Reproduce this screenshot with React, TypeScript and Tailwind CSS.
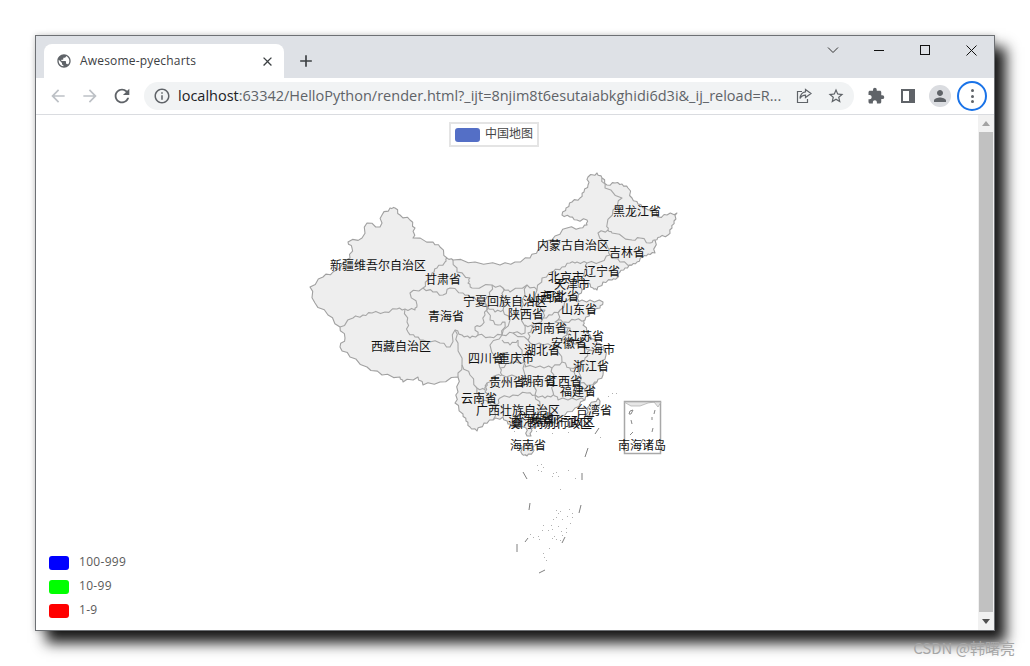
import React from "react";
import { MdArrowBack, MdArrowForward, MdRefresh, MdInfoOutline, MdStarBorder, MdExtension, MdPerson, MdClose, MdAdd, MdPublic } from "react-icons/md";

type P = [number, number];

function rough(pts: P[], closed = false): string {
  const out: string[] = [];
  const n = pts.length;
  const last = closed ? n : n - 1;
  for (let i = 0; i < last; i++) {
    const a = pts[i];
    const b = pts[(i + 1) % n];
    out.push(`${a[0]},${a[1]}`);
    const dx = b[0] - a[0];
    const dy = b[1] - a[1];
    const len = Math.hypot(dx, dy);
    if (len > 4) {
      const s = i % 2 === 0 ? 1 : -1;
      const off = Math.min(1.3, len * 0.12) * s;
      out.push(`${(a[0] + dx * 0.35 - (dy / len) * off).toFixed(1)},${(a[1] + dy * 0.35 + (dx / len) * off).toFixed(1)}`);
      out.push(`${(a[0] + dx * 0.7 + (dy / len) * off).toFixed(1)},${(a[1] + dy * 0.7 - (dx / len) * off).toFixed(1)}`);
    }
  }
  if (!closed) out.push(`${pts[n - 1][0]},${pts[n - 1][1]}`);
  return out.join(" ");
}

const outer: P[] = [
  [390,208],[395,208],[400,215],[410,220],[415,228],[413,238],[433,242],[440,247],[447,258],[453,260],[475,262],[500,265],[515,262],[530,258],[538,250],[543,245],[555,236],[567,228],[580,228],[587,225],[587,220],[577,220],[570,217],[562,215],[566,208],[572,202],[580,198],[584,192],[588,185],[588,177],[597,173],[602,178],[607,185],[615,183],[622,184],[628,188],[632,198],[638,204],[645,208],[655,210],[658,217],[667,215],[677,213],[674,221],[672,228],[668,235],[660,237],[655,240],[655,253],[648,254],[643,257],[637,262],[632,265],[625,268],[620,272],[617,278],[612,280],[603,282],[597,290],[593,288],[588,283],[582,290],[578,297],[578,302],[590,300],[603,302],[600,308],[590,313],[585,320],[583,325],[590,335],[597,343],[604,347],[606,355],[600,365],[603,375],[597,382],[590,392],[585,400],[575,408],[565,415],[548,424],[536,427],[531,428],[531,436],[527,436],[526,428],[515,427],[508,424],[503,417],[493,420],[484,423],[477,431],[470,427],[466,421],[463,414],[455,403],[458,392],[458,377],[440,382],[423,385],[418,377],[403,382],[400,377],[382,375],[367,367],[350,357],[340,347],[345,338],[340,327],[328,315],[315,303],[310,287],[323,277],[333,272],[350,258],[352,248],[348,242],[362,238],[367,223],[380,227],[382,215],
];

const inner: P[][] = [
  [[447,258],[445,262],[437,268],[432,273],[428,280],[423,288],[410,293],[417,305],[415,310],[405,309],[397,309],[385,312],[372,313],[363,315],[353,318],[340,327]],
  [[405,309],[407,322],[408,332],[415,337],[423,340],[440,343],[450,347],[455,330],[458,343],[462,365],[458,377]],
  [[423,288],[433,292],[443,295],[450,288],[463,293],[470,297],[480,300],[487,306],[485,315],[482,325],[475,327],[478,335],[470,338],[462,335],[455,330]],
  [[453,260],[457,272],[470,278],[468,283],[472,288],[492,285],[490,296],[483,300],[487,306],[495,312],[503,310],[503,296],[503,288],[510,292],[527,285],[537,290],[542,278],[553,272],[562,267],[570,263],[577,262],[587,263],[600,262],[610,255],[608,248],[598,233],[608,230],[607,225],[613,210],[622,198],[605,188],[602,178]],
  [[492,285],[503,288]],
  [[487,306],[490,320],[498,325],[505,322],[502,335],[490,337],[478,335]],
  [[503,310],[510,320],[502,335],[513,333],[525,333],[522,315],[522,300],[527,285]],
  [[608,230],[612,233],[632,240],[640,238],[650,243],[655,240]],
  [[610,255],[620,262],[632,265]],
  [[587,263],[585,270],[578,285],[582,290]],
  [[537,290],[535,305],[545,310],[543,318],[535,327],[525,325]],
  [[543,318],[552,315],[560,310],[568,300],[578,297]],
  [[560,310],[558,320],[565,322],[575,320],[585,320]],
  [[558,320],[555,322],[570,328],[565,332],[572,342],[582,345],[590,350],[597,350]],
  [[535,327],[528,333],[530,343],[543,345],[557,345],[567,335],[570,328]],
  [[513,333],[528,340],[530,343]],
  [[557,345],[562,362],[570,368],[580,366],[585,358],[590,350]],
  [[518,340],[522,355],[525,362],[525,367],[540,366],[552,368],[562,362]],
  [[552,368],[553,378],[553,392],[558,400],[572,398],[580,383],[575,375],[570,368]],
  [[580,366],[580,383],[590,385],[597,382]],
  [[572,398],[585,400]],
  [[580,383],[585,392]],
  [[502,340],[510,345],[518,340]],
  [[500,368],[510,363],[525,362],[523,380],[517,377],[502,375],[500,368]],
  [[500,368],[490,345],[502,335]],
  [[462,365],[470,375],[477,388],[485,390],[487,383],[497,375],[502,375]],
  [[487,383],[485,392],[497,405],[500,398],[513,395],[527,393],[535,395],[535,382],[523,380]],
  [[477,388],[480,400],[497,405],[493,420]],
  [[535,395],[545,398],[553,395]],
  [[535,395],[540,405],[538,415],[542,424]],
];

const hainan: P[] = [[521,447],[528,444],[534,446],[533,452],[527,456],[522,454]];
const taiwan: P[] = [[598,398],[600,401],[596,410],[590,418],[586,415],[589,406]];

const dashes: [number, number, number, number][] = [
  [523,472,527,479],[582,473,582,480],[581,505,579,513],[530,503,529,510],[565,537,562,543],[517,544,517,552],[545,570,539,573],[528,538,525,542],[599,428,595,434],[588,448,585,457],
];

const dots: P[] = [
  [537,465],[541,464],[543,467],[538,470],[541,471],[553,473],[556,472],[558,476],[552,476],[568,470],[575,478],[560,489],[556,510],[558,513],[556,517],[560,511],[569,509],[572,513],[567,516],[562,519],[553,519],[551,525],[558,526],[552,529],[561,531],[566,528],[572,517],[570,523],[566,532],[554,536],[552,538],[556,539],[548,530],[543,525],[542,530],[538,536],[539,539],[533,537],[530,534],[562,535],[560,540],[549,548],[543,553],[544,557],[546,560],[525,455],[514,431],[536,431],[558,427],[552,433],[568,432],[608,396],[612,393],[616,393],[600,437],
];

const labels: [string, number, number][] = [
  ["新疆维吾尔自治区",378,265],["甘肃省",443,279],["宁夏回族自治区",505,301],["青海省",446,316],["西藏自治区",401,346],["四川省",486,358],["重庆市",516,358],["贵州省",507,382],["云南省",479,398],["广西壮族自治区",518,410],["湖南省",538,381],["江西省",564,381],["福建省",578,391],["台湾省",594,410],["广东省",536,418],["澳门特别行政区",550,423],["香港特别行政区",553,421],["海南省",528,445],["湖北省",542,350],["安徽省",569,343],["上海市",597,349],["江苏省",586,336],["浙江省",591,366],["河南省",549,328],["陕西省",526,314],["山东省",579,309],["山西省",546,297],["河北省",561,296],["北京市",566,277],["天津市",572,284],["辽宁省",602,271],["吉林省",627,252],["内蒙古自治区",573,245],["黑龙江省",637,211],["南海诸岛",642,445],
];

function ChinaMap() {
  return (
    <svg className="absolute inset-0" width="942" height="515" viewBox="36 115 942 515">
      <g fill="#eeeeee" stroke="#a0a0a0" strokeWidth="1.1" strokeLinejoin="round">
        <polygon points={rough(outer, true)} />
        <polygon points={rough(hainan, true)} />
        <polygon points={rough(taiwan, true)} />
      </g>
      <g fill="none" stroke="#a6a6a6" strokeWidth="1.1" strokeLinejoin="round">
        {inner.map((l, i) => <polyline key={i} points={rough(l)} />)}
      </g>
      <g stroke="#808080" strokeWidth="1">
        {dashes.map((d, i) => <line key={i} x1={d[0]} y1={d[1]} x2={d[2]} y2={d[3]} />)}
      </g>
      <g fill="#b0b0b0">
        {dots.map((d, i) => <rect key={i} x={d[0]} y={d[1]} width="1" height="1" />)}
      </g>
      <rect x="624.5" y="401.5" width="36" height="52" fill="none" stroke="#a8a8a8" strokeWidth="1.5" />
      <path d="M624 402 L661 402 L658 407 L654 402 L648 403 L640 406 L631 406 Z" fill="#e6e6e6" stroke="#aaaaaa" strokeWidth="0.7" />
      <g stroke="#888888" strokeWidth="1" fill="none">
        <path d="M630 411 L633 410 L631 414 L629 414 Z" />
        <path d="M655 410 L654 414 M652 417 L652 420 M653 428 L652 432 M650 441 L647 445 M631 420 L632 424 M633 432 L630 435 M643 439 L641 443" />
      </g>
      <g fill="#111111" fontSize="12" textAnchor="middle">
        {labels.map(([t, x, y]) => <text key={t} x={x} y={y + 5}>{t}</text>)}
      </g>
    </svg>
  );
}

function Swatch({ cls, label }: { cls: string; label: string }) {
  return (
    <div className="flex items-center h-[14px] gap-[10px]">
      <div className={`w-[20px] h-[14px] rounded-[3px] ${cls}`} />
      <span className="text-[12px] leading-[12px] tracking-[0.3px] text-[#5a5a5a] font-['Open_Sans',sans-serif] mb-[2px]">{label}</span>
    </div>
  );
}

export default function App() {
  return (
    <div className="relative w-[1030px] h-[666px] bg-white overflow-hidden pl-[35px] pt-[35px] font-['Noto_Sans_CJK_SC',sans-serif]">
      <div className="w-[960px] h-[596px] border border-[#6d7074] flex flex-col bg-white shadow-[11px_12px_13px_rgba(0,0,0,0.9),0_0_6px_rgba(0,0,0,0.2)]">
        {/* tab strip */}
        <div className="h-[42px] bg-[#dee1e6] flex items-end pl-[8px] shrink-0">
          <div className="w-[240px] h-[34px] bg-white rounded-t-[8px] flex items-center pl-[12px] pr-[9px]">
            <MdPublic className="text-[#5f6368] w-[16px] h-[16px]" />
            <span className="ml-[8px] text-[12px] tracking-[0.18px] text-[#3c4043] font-['Open_Sans',sans-serif] flex-1">Awesome-pyecharts</span>
            <MdClose className="text-[#3c4043] w-[15px] h-[15px]" />
          </div>
          <div className="h-[34px] flex items-center ml-[12px]">
            <MdAdd className="text-[#3c4043] w-[20px] h-[20px]" />
          </div>
          <div className="ml-auto self-start h-[28px] flex items-center text-[#222]">
            <div className="w-[46px] flex justify-center">
              <svg width="12" height="12" viewBox="0 0 12 12" fill="none" stroke="#333" strokeWidth="1"><path d="M1 3.5 L6 8.5 L11 3.5" /></svg>
            </div>
            <div className="w-[46px] flex justify-center">
              <div className="w-[10px] h-[1px] bg-[#111]" />
            </div>
            <div className="w-[46px] flex justify-center">
              <div className="w-[10px] h-[10px] border border-[#111]" />
            </div>
            <div className="w-[46px] flex justify-center">
              <svg width="11" height="11" viewBox="0 0 11 11" stroke="#111" strokeWidth="1"><path d="M0.5 0.5 L10.5 10.5 M10.5 0.5 L0.5 10.5" /></svg>
            </div>
          </div>
        </div>
        {/* toolbar */}
        <div className="h-[37px] bg-white border-b border-[#dadce0] flex items-center pl-[6px] shrink-0">
          <div className="w-[32px] flex justify-center"><MdArrowBack className="w-[20px] h-[20px] text-[#bdc1c6]" /></div>
          <div className="w-[32px] flex justify-center"><MdArrowForward className="w-[20px] h-[20px] text-[#bdc1c6]" /></div>
          <div className="w-[32px] flex justify-center"><MdRefresh className="w-[22px] h-[22px] text-[#5f6368]" /></div>
          <div className="ml-[6px] w-[710px] h-[28px] rounded-full bg-[#f1f3f4] flex items-center pl-[9px]">
            <MdInfoOutline className="w-[18px] h-[18px] text-[#5f6368]" />
            <span className="ml-[7px] w-[604px] text-[14.5px] whitespace-nowrap overflow-hidden text-[#5f6368] font-['Open_Sans',sans-serif]">
              <span className="text-[#202124]">localhost</span>:63342/HelloPython/render.html?_ijt=8njim8t6esutaiabkghidi6d3i&amp;_ij_reload=R...
            </span>
            <div className="ml-[13px] w-[18px] flex justify-center">
              <svg width="16" height="16" viewBox="0 0 16 16" fill="none" stroke="#5f6368" strokeWidth="1.2">
                <path d="M6 3.5 H1.5 V14.5 H11.5 V11" />
                <path d="M9.5 1.5 L15 5.5 L9.5 9.5 V7.2 C7 7.2 5.2 8.2 4 10.5 C4.3 7 6.2 4.2 9.5 3.8 Z" />
              </svg>
            </div>
            <div className="ml-[14px] w-[18px] flex justify-center"><MdStarBorder className="w-[20px] h-[20px] text-[#5f6368]" /></div>
          </div>
          <div className="ml-[6px] w-[32px] flex justify-center"><MdExtension className="w-[18px] h-[18px] text-[#5f6368]" /></div>
          <div className="w-[32px] flex justify-center">
            <div className="w-[14px] h-[14px] border-2 border-[#5f6368] border-r-[6px]" />
          </div>
          <div className="w-[32px] flex justify-center">
            <div className="w-[22px] h-[22px] rounded-full bg-[#dadce0] flex items-center justify-center"><MdPerson className="w-[18px] h-[18px] text-[#5f6368]" /></div>
          </div>
          <div className="ml-[1px] w-[30px] h-[30px] rounded-full border-2 border-[#1a73e8] flex flex-col items-center justify-center gap-[2.5px]">
            <div className="w-[3px] h-[3px] rounded-full bg-[#5f6368]" />
            <div className="w-[3px] h-[3px] rounded-full bg-[#5f6368]" />
            <div className="w-[3px] h-[3px] rounded-full bg-[#5f6368]" />
          </div>
        </div>
        {/* page */}
        <div className="flex-1 flex min-h-0">
          <div className="relative flex-1 flex flex-col justify-between">
            <ChinaMap />
            <div className="relative self-start ml-[413px] mt-[7px] w-[90px] h-[25px] border-2 border-[#e4e4e4] flex items-center pl-[4px] gap-[5px]">
              <div className="w-[25px] h-[14px] rounded-[3px] bg-[#546fc6]" />
              <span className="text-[12px] leading-[14px] mb-[3px] text-[#464646]">中国地图</span>
            </div>
            <div className="relative ml-[13px] mb-[12px] flex flex-col gap-[10px]">
              <Swatch cls="bg-[#0000ff]" label="100-999" />
              <Swatch cls="bg-[#00ff00]" label="10-99" />
              <Swatch cls="bg-[#ff0000]" label="1-9" />
            </div>
          </div>
          <div className="w-[16px] bg-[#f1f1f1] flex flex-col items-center shrink-0">
            <div className="h-[17px] flex items-center justify-center">
              <svg width="8" height="5" viewBox="0 0 8 5"><path d="M0 5 L4 0 L8 5 Z" fill="#a3a3a3" /></svg>
            </div>
            <div className="w-[14px] flex-1 bg-[#c1c1c1]" />
            <div className="h-[18px] flex items-center justify-center">
              <svg width="8" height="5" viewBox="0 0 8 5"><path d="M0 0 L4 5 L8 0 Z" fill="#505050" /></svg>
            </div>
          </div>
        </div>
      </div>
      <div className="absolute right-[15px] bottom-[9px] text-[15px] leading-[18px] text-[#a6a6a6]">CSDN @韩曙亮</div>
    </div>
  );
}
